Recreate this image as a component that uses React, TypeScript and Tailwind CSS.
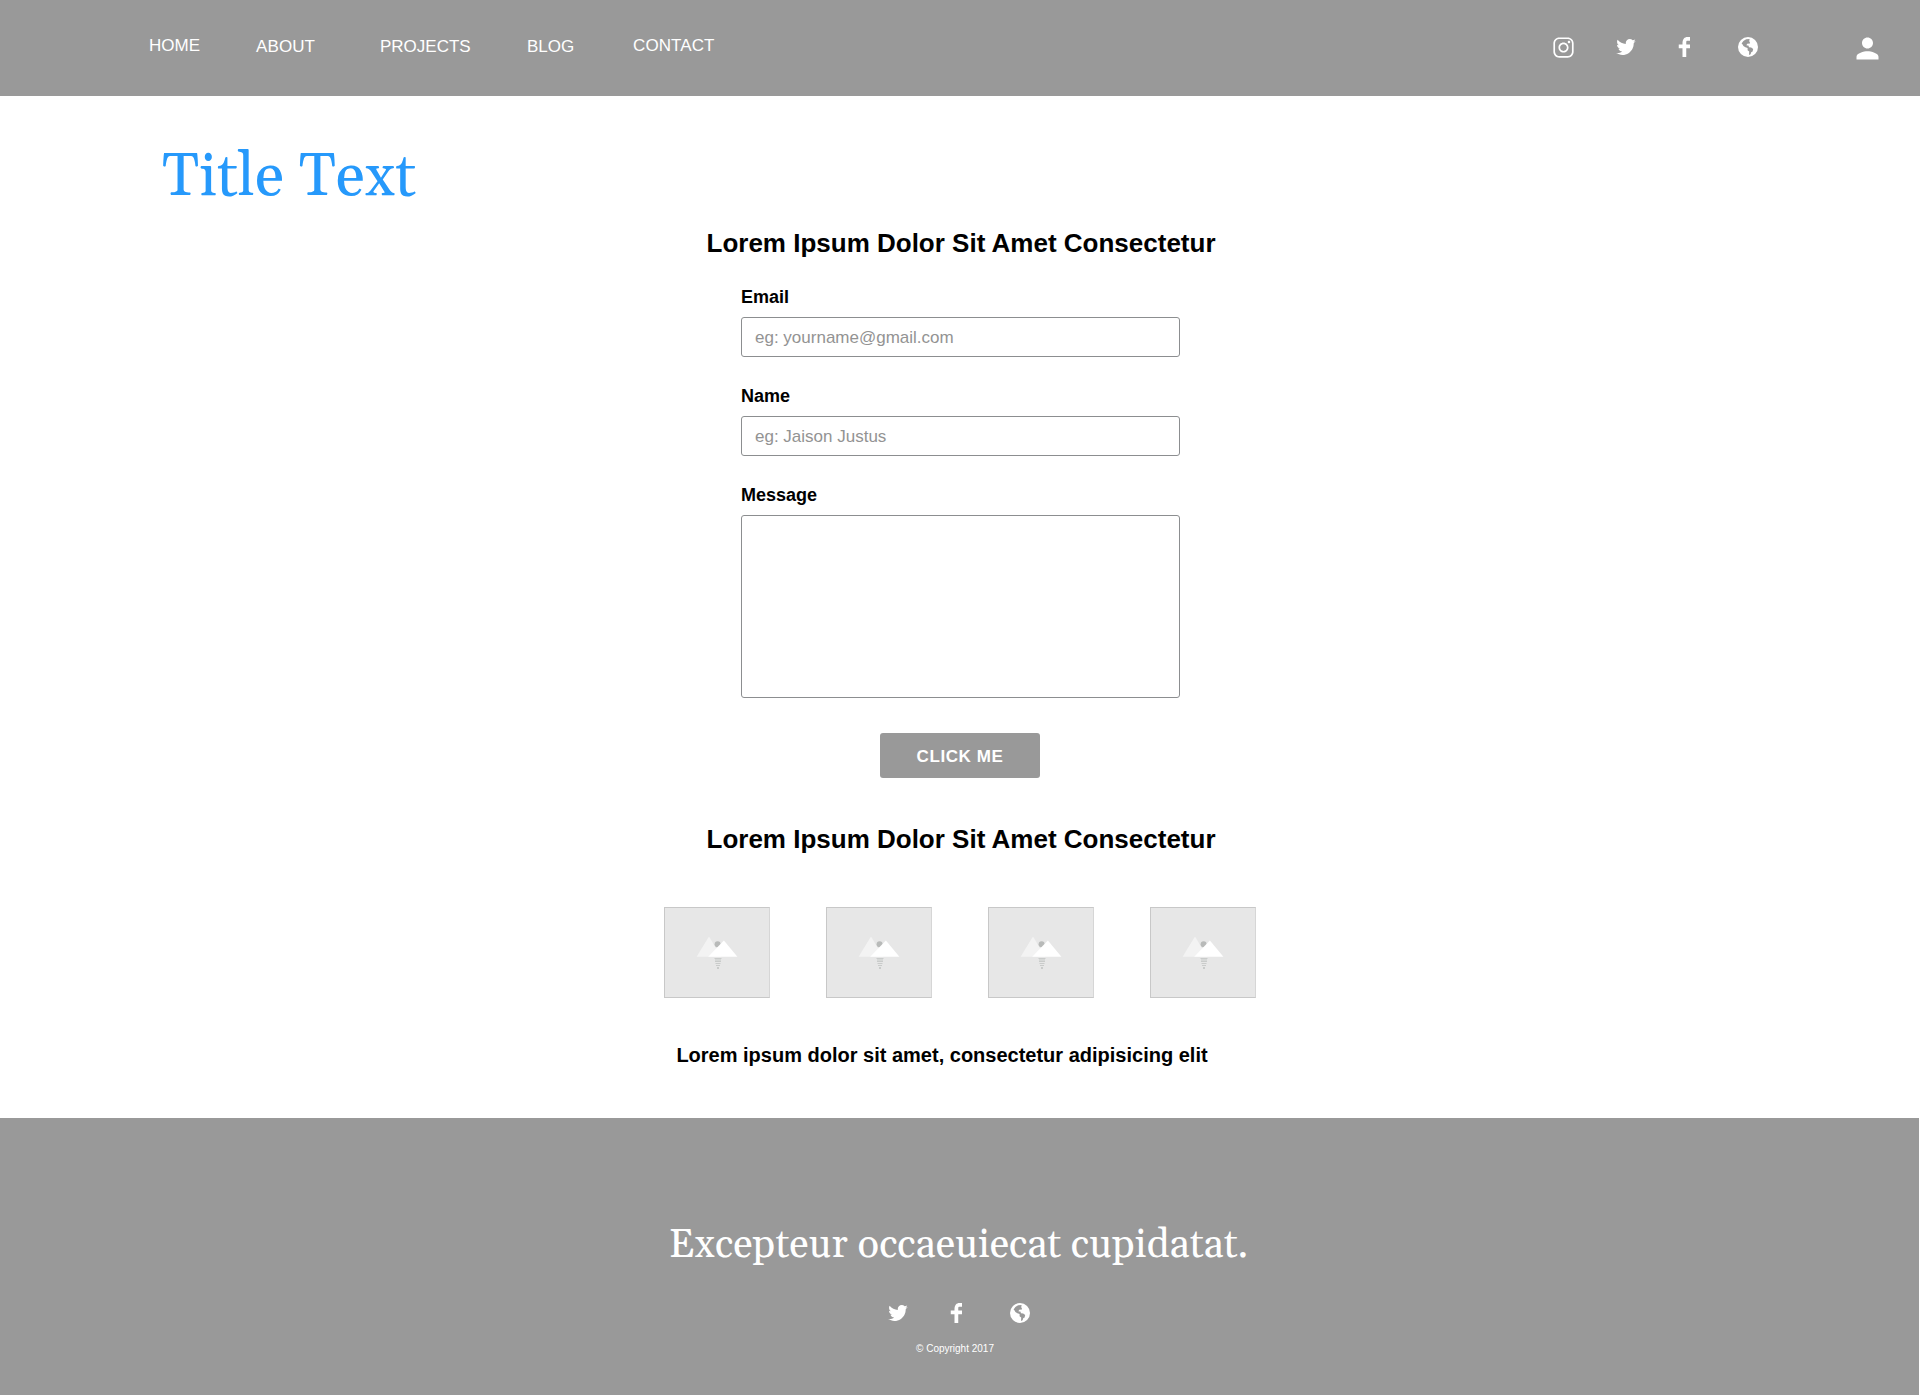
import type { ReactNode } from "react";
import { IoLogoInstagram } from "react-icons/io";
import { TiSocialFacebook, TiSocialTwitter } from "react-icons/ti";
import { MdPerson } from "react-icons/md";

const SANS = "font-['Liberation_Sans',Arial,sans-serif]";
const SERIF = "font-[Gelasio,Georgia,'Liberation_Serif',serif]";

function IconSlot({ className = "", children }: { className?: string; children: ReactNode }) {
  return <a className={`flex h-[34px] w-[34px] items-center justify-center ${className}`}>{children}</a>;
}

function Globe() {
  return (
    <svg width="20" height="20" viewBox="0 0 20 20">
      <circle cx="10" cy="10" r="10" fill="#fff" />
      <path
        fill="#999"
        d="M3.6 6.6 5.4 3.9 8.2 2.2 11.6 2 11.2 4.2 12 5.6 11.5 6.8 9.8 6.6 8.7 7.4 8.6 8.6 10.4 8.4 11 10.2 13.2 10.6 15.2 12 14.6 14.4 13.2 15.2 12.6 17.2 11 18 11.2 14.6 9.6 13.2 9.6 11 7.4 10.3 5.4 9 4.6 7.6Z"
      />
    </svg>
  );
}

function SocialLinks() {
  return (
    <>
      <IconSlot>
        <TiSocialTwitter size={26} />
      </IconSlot>
      <IconSlot className="ml-[25px]">
        <TiSocialFacebook size={30} />
      </IconSlot>
      <IconSlot className="ml-[29px]">
        <Globe />
      </IconSlot>
    </>
  );
}

function Placeholder() {
  return (
    <div className="h-[91px] w-[106px] border border-[#c8c8c8] border-r-[#d6d6d6] bg-[#e7e7e7]">
      <svg width="104" height="89" viewBox="1 1 104 89">
        <path d="M45 29.5 57 49.7H32.6Z" fill="#f3f3f3" />
        <circle cx="53.6" cy="37.2" r="3" fill="#b8bab9" />
        <path d="M59.9 33.5 73.4 49.7H44.2Z" fill="#fff" />
        <g fill="#c9cbca">
          <rect x="50.5" y="51" width="7" height="1" />
          <rect x="51" y="52" width="6" height="2" fill="#d6d8d7" />
          <rect x="51" y="54" width="6" height="1" />
          <rect x="51.5" y="56" width="5" height="1" />
          <rect x="52" y="58" width="4" height="1" />
          <rect x="53" y="60" width="2" height="2" />
        </g>
      </svg>
    </div>
  );
}

function Field({ label, children }: { label: string; children: ReactNode }) {
  return (
    <label className="block">
      <span className="mb-2 block text-[18px] leading-6 font-bold">{label}</span>
      {children}
    </label>
  );
}

const inputStyle =
  "block w-full rounded-[3px] border border-[#8c8e90] bg-white px-[13px] text-[17px] placeholder:text-[#939393] placeholder:opacity-100 outline-none";

export default function App() {
  return (
    <div className={`flex h-[1395px] w-[1920px] flex-col bg-white text-black ${SANS}`}>
      <header className="flex h-24 items-start bg-[#999] pr-9 pl-[149px] text-white">
        <nav className="flex pt-[34px] text-[17px] leading-6">
          <a className="w-[107px]">HOME</a>
          <a className="mt-px w-[124px] tracking-[0.1px]">ABOUT</a>
          <a className="mt-px w-[147px]">PROJECTS</a>
          <a className="mt-px w-[106px]">BLOG</a>
          <a className="tracking-[0.1px]">CONTACT</a>
        </nav>
        <div className="ml-auto flex pt-[30px]">
          <IconSlot className="mr-[29px]">
            <IoLogoInstagram size={27} />
          </IconSlot>
          <SocialLinks />
          <IconSlot className="mt-px ml-[85px]">
            <MdPerson size={33} />
          </IconSlot>
        </div>
      </header>

      <main className="flex flex-col items-center pt-[50px] pl-px">
        <h1 className={`self-start pl-[161px] text-[60px] leading-[64px] tracking-[0.1px] text-[#2699fb] ${SERIF}`}>
          Title Text
        </h1>
        <h2 className="mt-[17px] pl-px text-[26px] leading-8 font-bold">Lorem Ipsum Dolor Sit Amet Consectetur</h2>
        <form className="mt-[26px] flex w-[439px] flex-col gap-[27px]">
          <Field label="Email">
            <input className={`h-10 pt-0.5 ${inputStyle}`} placeholder="eg: yourname@gmail.com" />
          </Field>
          <Field label="Name">
            <input className={`h-10 pt-0.5 ${inputStyle}`} placeholder="eg: Jaison Justus" />
          </Field>
          <Field label="Message">
            <textarea className={`h-[183px] resize-none ${inputStyle}`} />
          </Field>
        </form>
        <button className="mt-[35px] mr-px h-[45px] w-40 rounded-[3px] bg-[#999] pt-0.5 text-[17px] font-bold tracking-[0.6px] text-white">
          CLICK ME
        </button>
        <h2 className="mt-[45px] pl-px text-[26px] leading-8 font-bold">Lorem Ipsum Dolor Sit Amet Consectetur</h2>
        <div className="mt-[52px] mr-px flex gap-14">
          <Placeholder />
          <Placeholder />
          <Placeholder />
          <Placeholder />
        </div>
        <p className="mt-[45px] mr-[37px] text-[20px] leading-6 font-bold">
          Lorem ipsum dolor sit amet, consectetur adipisicing elit
        </p>
      </main>

      <footer className="mt-[51px] flex w-[1919px] flex-1 flex-col items-center bg-[#999] pt-[104px] text-white">
        <p className={`mr-0.5 text-[40px] leading-[48px] whitespace-nowrap ${SERIF}`}>
          Excepteur occaeuiecat cupidatat.
        </p>
        <div className="mt-[26px] mr-px flex">
          <SocialLinks />
        </div>
        <small className="mt-[13px] mr-[9px] text-[10px] leading-3">© Copyright 2017</small>
      </footer>
    </div>
  );
}
